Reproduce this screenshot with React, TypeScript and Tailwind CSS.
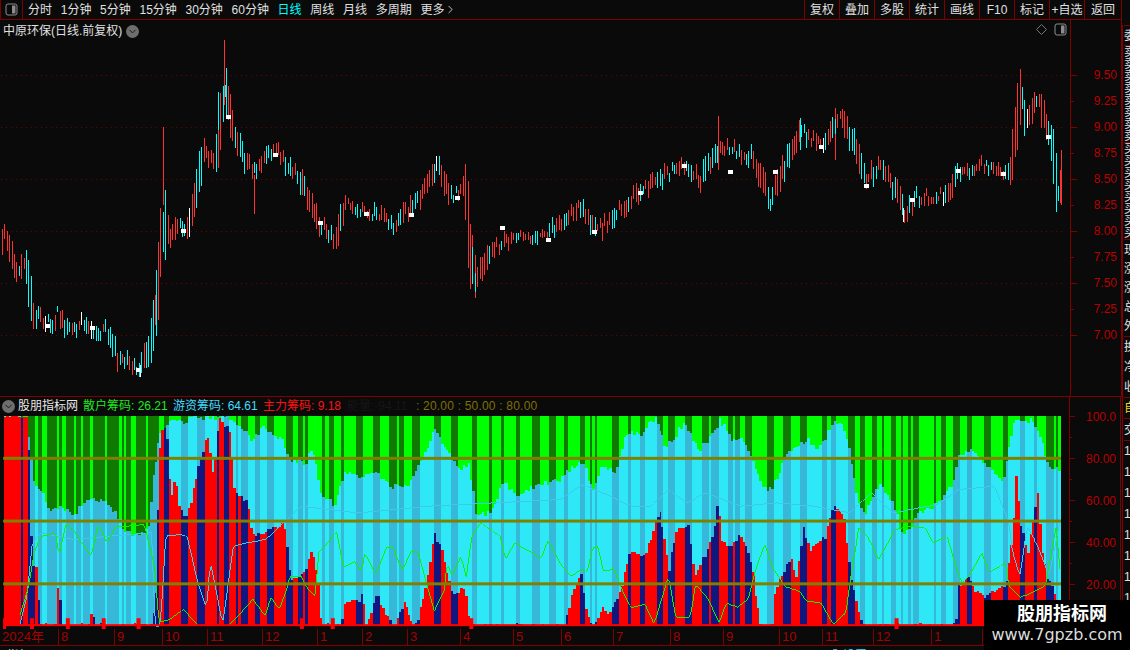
import React from "react";
import { ChevronDown, ChevronRight } from "lucide-react";

type Pt = number[];

// zoomed-in readings of the chart outlines, converted back to page coordinates
const L3 = (p: Pt[]) => p.map(([v, w]) => [v / 2.8, 390 + w / 3]);
const L4 = (p: Pt[]) => p.map(([v, w]) => [v / 2.8, 520 + w / 3]);
const R5 = (p: Pt[]) => p.map(([v, w]) => [560 + v / 2.75, 390 + w / 3]);
const R6 = (p: Pt[]) => p.map(([v, w]) => [560 + v / 2.75, 520 + w / 3]);

const lerp = (keys: Pt[], x: number) => {
  if (x <= keys[0][0]) return keys[0][1];
  for (let i = 1; i < keys.length; i++) {
    if (x <= keys[i][0]) {
      const [x0, y0] = keys[i - 1];
      const [x1, y1] = keys[i];
      return y0 + ((y1 - y0) * (x - x0)) / Math.max(x1 - x0, 0.01);
    }
  }
  return keys[keys.length - 1][1];
};

const seeded = (seed: number) => () => {
  seed = (seed + 0x6d2b79f5) | 0;
  let t = Math.imul(seed ^ (seed >>> 15), 1 | seed);
  t = (t + Math.imul(t ^ (t >>> 7), 61 | t)) ^ t;
  return ((t ^ (t >>> 14)) >>> 0) / 4294967296;
};

const BAR_STEP = 2.4;
const BAR_COUNT = 442;
const barX = (i: number) => 2 + i * BAR_STEP;

const priceKeys: Pt[] = [
  [1, 247], [5, 230], [9, 245], [15, 265], [20, 277], [24, 257], [27, 277], [33, 313], [42, 320], [50, 325],
  [58, 313], [68, 333], [83, 323], [97, 333], [107, 330], [117, 357], [127, 363], [140, 368], [150, 343], [155, 308],
  [158, 280], [161, 235], [165, 220], [171, 240], [177, 223], [187, 233], [197, 187], [203, 150], [215, 160], [222, 105],
  [226, 90], [232, 130], [240, 150], [252, 172], [275, 150], [300, 180], [320, 225], [335, 240], [345, 205], [380, 215],
  [395, 225], [420, 195], [437, 165], [450, 195], [465, 190], [470, 262], [475, 280], [490, 250], [520, 235], [545, 235],
  [580, 205], [596, 232], [640, 190], [680, 165], [700, 180], [720, 145], [750, 155], [770, 200], [800, 130], [820, 145],
  [840, 115], [852, 140], [866, 180], [880, 165], [898, 197], [905, 215], [915, 197], [945, 195], [958, 172], [980, 165],
  [1003, 173], [1010, 170], [1018, 113], [1021, 93], [1026, 125], [1033, 110], [1038, 100], [1047, 130], [1052, 140], [1056, 183], [1060, 197], [1062, 167],
];

const specials: [number, number, number, string][] = [
  [224, 40, 105, "#ff3232"], [226, 68, 118, "#00ffff"], [220, 97, 150, "#ff3232"], [218, 92, 130, "#00ffff"],
  [163, 127, 205, "#ff3232"], [165, 190, 260, "#00ffff"], [155, 295, 325, "#ff3232"], [158, 267, 294, "#ff3232"],
  [472, 235, 282, "#ff3232"], [475, 255, 298, "#ff3232"], [1020, 69, 125, "#ff3232"], [1017, 83, 146, "#ff3232"],
  [1056, 153, 212, "#00ffff"], [1061, 150, 205, "#ff3232"], [835, 108, 160, "#ff3232"], [718, 116, 170, "#ff3232"],
  [800, 118, 150, "#00ffff"], [140, 365, 377, "#ffffff"], [903, 208, 222, "#ffffff"], [254, 175, 214, "#ff3232"],
];

const markers: Pt[] = [
  [47, 326], [92, 328], [138, 370], [183, 231], [228, 117], [275, 155], [320, 223], [366, 214], [411, 215], [457, 198], [502, 228],
  [548, 240], [594, 232], [640, 193], [684, 166], [730, 172], [775, 172], [821, 147], [866, 186], [912, 200], [958, 171], [1003, 174], [1048, 137],
];

const cyanKeys: Pt[] = [
  ...L3([[0, 78], [70, 78], [75, 180], [85, 275], [100, 290], [130, 360], [160, 350], [200, 370], [240, 330], [290, 330], [330, 390]]),
  ...L4([[340, 40], [390, 45], [410, 10]]),
  ...L3([[420, 270], [440, 140], [470, 90], [500, 100], [530, 85], [600, 80], [650, 90], [700, 150], [730, 110], [780, 145], [810, 210], [850, 220], [870, 170], [890, 300], [930, 350], [960, 250], [1000, 260], [1040, 240], [1090, 290], [1140, 290], [1180, 210], [1215, 120], [1250, 190], [1280, 240], [1310, 220], [1330, 370], [1370, 370], [1410, 270], [1440, 320], [1510, 280]]),
  ...R5([[0, 270], [30, 230], [60, 210], [90, 310], [110, 235], [150, 240], [180, 130], [220, 135], [260, 80], [290, 170], [310, 150], [340, 95], [380, 180], [410, 150], [440, 90], [470, 150], [500, 140], [530, 220], [570, 310], [600, 260], [620, 190], [680, 150], [710, 180], [745, 110], [770, 90], [795, 170], [820, 340], [840, 370], [880, 280], [920, 350], [945, 440], [970, 400], [990, 370], [1040, 340], [1080, 290], [1100, 200], [1130, 180], [1160, 210], [1220, 280], [1250, 100], [1300, 90], [1330, 160], [1345, 230], [1380, 240]]),
];

const redKeys: Pt[] = [
  ...L3([[0, 78], [70, 78], [75, 260]]),
  ...L4([[80, 130], [95, 140], [105, 320], [150, 320], [155, 180], [165, 320], [240, 320], [250, 265], [260, 320], [420, 320], [430, 200]]),
  ...L3([[445, 78], [458, 78], [465, 200], [475, 330], [485, 240], [495, 340], [510, 385], [530, 340], [550, 230], [560, 190], [575, 130], [590, 260], [610, 80], [640, 130], [650, 300], [670, 320], [690, 340]]),
  ...L4([[700, 50], [790, 10], [800, 100], [810, 190], [830, 170], [850, 150], [870, 90], [885, 190], [895, 320], [950, 320], [960, 250], [1000, 250], [1010, 220], [1020, 320], [1050, 225], [1075, 290], [1100, 320], [1110, 290], [1130, 245], [1150, 320], [1170, 300], [1190, 200], [1215, 45], [1240, 110], [1260, 225], [1300, 210], [1315, 320]]),
  ...R6([[-20, 320], [10, 320], [30, 230], [55, 165], [70, 280], [85, 320], [115, 270], [130, 290], [160, 230], [190, 90], [230, 115], [260, 10], [275, -20], [300, 150], [320, 30], [355, 15], [370, 180], [400, 105], [425, 30], [435, -84], [445, 60], [470, 90], [490, 45], [510, 70], [530, 150], [550, 320], [585, 320], [590, 230], [610, 170], [635, 115], [650, 180], [670, 25], [690, 90], [710, 70], [730, 50], [750, -45], [780, -10], [800, 170], [820, 270], [830, 320], [870, 320], [880, 310], [890, 320], [1090, 320], [1100, 205], [1125, 170], [1140, 210], [1165, 235], [1230, 200], [1250, 20], [1258, -159], [1270, 10], [1290, 100], [1305, 0], [1315, -114], [1325, 50], [1340, 170], [1360, 210], [1380, 320]]),
];

const greenLine: Pt[] = [
  ...L4([[40, 318], [50, 290], [75, 200], [90, 100], [110, 50], [150, 40], [160, 110], [180, 10], [200, 30], [250, 110], [270, 15], [295, 70], [320, 20], [350, 20], [400, 15], [430, 150], [440, 310], [470, 300], [510, 270], [550, 318], [640, 318], [660, 295], [690, 260], [705, 240], [740, 290], [755, 235], [780, 270], [800, 210], [810, 170], [840, 170], [860, 210], [880, 230], [890, 100], [900, 90], [940, 35], [960, 145], [990, 125], [1010, 160], [1020, 100], [1050, 165], [1080, 85], [1100, 85], [1125, 155], [1150, 95], [1170, 100], [1190, 180], [1215, 275], [1245, 210], [1250, 130], [1265, 170], [1290, 110], [1305, 175], [1320, 50], [1345, 10], [1400, 50], [1415, 120], [1440, 70], [1490, 100], [1515, 120], [1535, 60], [1568, 130]]),
  ...R6([[30, 170], [60, 150], [75, 160], [90, 85], [105, 80], [120, 155], [150, 150], [175, 220], [195, 265], [235, 255], [260, 315], [300, 170], [320, 295], [360, 295], [375, 195], [410, 240], [440, 310], [460, 250], [490, 265], [520, 240], [540, 150], [565, 75], [590, 150], [620, 200], [660, 215], [680, 245], [720, 250], [755, 315], [790, 280], [800, 195], [825, 25], [850, 50], [880, 120], [925, 30], [970, 20], [1010, 25], [1030, 70], [1070, 50], [1095, 150], [1110, 190], [1130, 170], [1165, 100], [1185, 160], [1230, 130], [1240, 200], [1270, 235], [1340, 200], [1370, 20], [1380, 150]]),
];

const cyanLine: Pt[] = [
  ...L4([[20, 318], [50, 318], [70, 230], [85, 70], [110, 40], [200, 60], [300, 50], [420, 40], [430, 320], [445, 320], [460, 50], [500, 45], [520, 50], [550, 190], [575, 270], [585, 125], [620, 315], [650, 80], [690, 70], [740, 60], [790, 10], [840, -40], [1000, -20], [1200, -40], [1568, -60]]),
  ...R5([[60, 285], [100, 300], [200, 350], [250, 350], [300, 300], [350, 340], [400, 310], [500, 350], [600, 340], [700, 350], [800, 370], [860, 310], [920, 370], [1040, 345], [1100, 300], [1200, 290], [1240, 400]]),
  ...R6([[1250, 100], [1270, 170], [1290, 20], [1310, 60], [1330, 110], [1350, 170], [1380, 10]]),
];

const rnd = seeded(7);
const flags: boolean[] = [];
while (flags.length < BAR_COUNT) {
  const up = flags.length === 0 || !flags[flags.length - 1];
  const early = barX(flags.length) < 160;
  const run = 1 + Math.floor(rnd() * (up ? (early ? 2 : 6) : early ? 5 : 3));
  for (let k = 0; k < run; k++) flags.push(up);
}
for (let i = 0; i < 7; i++) flags[i] = true;

const PriceBars = () => {
  const r = seeded(21);
  const paths: Record<string, string> = { "#ff3232": "", "#00ffff": "", "#ffffff": "" };
  for (let i = 0; i < BAR_COUNT; i++) {
    const x = barX(i);
    const slope = Math.abs(lerp(priceKeys, x + 3) - lerp(priceKeys, x - 3));
    const cy = lerp(priceKeys, x) + (r() - 0.5) * 11;
    const h = 4 + r() * 10 + slope;
    const c = r() < 0.04 ? "#ffffff" : flags[i] ? "#ff3232" : "#00ffff";
    const xx = Math.round(x) + 0.5;
    paths[c] += `M${xx} ${Math.round(cy - h / 2)}V${Math.round(cy + h / 2)}`;
  }
  for (const [x, a, b, c] of specials) paths[c] += `M${x + 0.5} ${a}V${b}`;
  return (
    <>
      {Object.entries(paths).map(([c, d]) => (
        <path key={c} d={d} stroke={c} strokeWidth={1} fill="none" shapeRendering="crispEdges" />
      ))}
    </>
  );
};

const IndicatorBars = () => {
  const r = seeded(3);
  const bars = [];
  for (let i = 0; i < BAR_COUNT; i++) {
    const x = Math.round(barX(i));
    const next = Math.round(barX(i + 1));
    const w = Math.min(next, 1063) - x;
    if (w <= 0) continue;
    const up = flags[i];
    const red = Math.min(627, Math.round(lerp(redKeys, x) + (r() - 0.5) * 5));
    const top = Math.max(416, Math.round(lerp(cyanKeys, x) + (r() - 0.5) * 6));
    const redTop = Math.max(top, red < 416 ? 416 : red);
    bars.push(
      <g key={i}>
        <rect x={x} y={416} width={w} height={Math.max(top - 416, 0)} fill={up ? "#00ff00" : "#107a00"} />
        <rect x={x} y={top} width={w} height={redTop - top} fill={up ? "#2ee8f8" : "#38b8d8"} />
        <rect x={x} y={redTop} width={w} height={627 - redTop} fill={up ? "#ff0000" : "#101880"} />
      </g>
    );
  }
  return <g shapeRendering="crispEdges">{bars}</g>;
};

const linePoints = (keys: Pt[]) => {
  const pts: string[] = [];
  for (let x = 18; x < 1063; x += 2) pts.push(`${x},${Math.round(lerp(keys, x))}`);
  return pts.join(" ");
};

const PriceChart = () => (
  <svg width={1069} height={376} viewBox="0 20 1069 376" className="block">
    {[75, 127, 179, 231, 283, 335].map((y) => (
      <line key={y} x1={1} x2={1066} y1={y + 0.5} y2={y + 0.5} stroke="#6e0000" strokeDasharray="1 4" />
    ))}
    <PriceBars />
    {markers.map(([x, y]) => (
      <rect key={x} x={x - 2} y={y - 2} width={5} height={4} fill="#ffffff" />
    ))}
  </svg>
);

const IndicatorChart = () => (
  <svg width={1069} height={214} viewBox="0 416 1069 214" className="block">
    <rect x={0} y={416} width={2} height={214} fill="#0a0a0a" />
    <IndicatorBars />
    <polyline points={linePoints(cyanLine)} fill="none" stroke="#40c8e8" strokeWidth={1} shapeRendering="crispEdges" />
    <polyline points={linePoints(greenLine)} fill="none" stroke="#10f000" strokeWidth={1} shapeRendering="crispEdges" />
    <rect x={2} y={625} width={1061} height={2} fill="#ff0000" />
    {[30, 66, 102, 137, 301, 332, 471, 898].map((x) => (
      <rect key={x} x={x - 2} y={619} width={4} height={11} fill="#ff0000" />
    ))}
    <rect x={1} y={619} width={3} height={11} fill="#ff0000" />
    {[458, 521, 584].map((y) => (
      <rect key={y} x={1} y={y - 1} width={1062} height={3} fill="#808000" />
    ))}
  </svg>
);

const PanelIcon = () => (
  <svg width={13} height={13} viewBox="0 0 13 13">
    <rect x={1} y={1} width={11} height={11} rx={2} fill="none" stroke="#8c8c8c" />
    <rect x={7} y={2.5} width={3.5} height={8} fill="#8c8c8c" />
  </svg>
);

const DiamondIcon = () => (
  <svg width={11} height={11} viewBox="0 0 11 11">
    <path d="M5.5 .5L10.5 5.5L5.5 10.5L.5 5.5Z" fill="none" stroke="#777" />
  </svg>
);

const RoundChevron = () => (
  <span className="flex h-[13px] w-[13px] items-center justify-center rounded-full bg-[#6e6e6e]">
    <ChevronDown size={11} strokeWidth={2} className="text-[#111]" />
  </span>
);

const periods = ["分时", "1分钟", "5分钟", "15分钟", "30分钟", "60分钟", "日线", "周线", "月线", "多周期"];
const tools = ["复权", "叠加", "多股", "统计", "画线", "F10", "标记", "+自选"];

const TopBar = () => (
  <div className="flex h-[20px] shrink-0 items-stretch border-b border-[#800000] text-[#e0e0e0]">
    <div className="flex w-[23px] items-center justify-center border-x border-[#800000]">
      <PanelIcon />
    </div>
    <div className="flex flex-1 items-center gap-[8.7px] pl-[5px]">
      {periods.map((p) => (
        <span key={p} className={p === "日线" ? "text-[#00ffff]" : ""}>
          {p}
        </span>
      ))}
      <span className="flex items-center">
        更多
        <ChevronRight size={13} strokeWidth={1.4} className="text-white" />
      </span>
    </div>
    <div className="flex">
      {tools.map((t) => (
        <div key={t} className="flex w-[35px] items-center justify-center border-l border-[#800000]">
          {t}
        </div>
      ))}
      <div className="flex w-[38px] items-center justify-center border-x border-[#800000]">返回</div>
    </div>
  </div>
);

const priceLabels = ["9.50", "9.25", "9.00", "8.75", "8.50", "8.25", "8.00", "7.75", "7.50", "7.25", "7.00"];

const PriceAxis = () => (
  <div className="flex w-[52px] flex-col border-x border-[#800000] pt-[42px] text-[#b80000]">
    {priceLabels.map((l, i) => (
      <div key={l} className="flex h-[26px] items-center justify-between pr-[4px]">
        <span className={`h-px bg-[#800000] ${i % 2 === 0 ? "w-[6px]" : "w-[3px]"}`} />
        <span>{l}</span>
      </div>
    ))}
  </div>
);

const indLabels = ["100.0", "", "80.00", "", "60.00", "", "40.00", "", "20.00", ""];

const IndicatorAxis = () => (
  <div className="flex w-[52px] flex-col border-x border-[#800000] pt-[9px] text-[#b80000]">
    {indLabels.map((l, i) => (
      <div key={i} className="flex h-[21px] items-center justify-between pr-[4px]">
        <span className={`h-px bg-[#800000] ${l ? "w-[5px]" : "w-[2px]"}`} />
        <span>{l}</span>
      </div>
    ))}
  </div>
);

const IndicatorHeader = () => (
  <div className="flex h-[19px] items-center pl-[2px] whitespace-nowrap">
    <RoundChevron />
    <span className="ml-[3px] text-[#e8e8e8]">股朋指标网</span>
    <span className="ml-[5px] w-[90px] text-[#20e820]">散户筹码: 26.21</span>
    <span className="w-[90px] text-[#40dcff]">游资筹码: 64.61</span>
    <span className="w-[84px] text-[#ff1010]">主力筹码: 9.18</span>
    <span className="w-[69px] text-[#161616]">能量:-94.11</span>
    <span className="tracking-[0.2px] text-[#807000]">: 20.00 : 50.00 : 80.00</span>
  </div>
);

const months: [string, number][] = [
  ["8", 58], ["9", 114], ["10", 162], ["11", 207], ["12", 262], ["1", 317], ["2", 362], ["3", 407], ["4", 460], ["5", 513],
  ["6", 561], ["7", 613], ["8", 670], ["9", 723], ["10", 779], ["11", 822], ["12", 873], ["1", 931], ["2", 982],
];

const DateAxis = () => (
  <div className="relative h-[17px] border-b border-[#800000] text-[13px] text-[#a80000]">
    <span className="absolute left-[2px] top-0 leading-[16px]">2024年</span>
    {months.map(([m, x]) => (
      <span
        key={x}
        className="absolute top-0 h-[16px] border-l border-[#800000] pl-[2px] leading-[16px]"
        style={{ left: x }}
      >
        {m}
      </span>
    ))}
  </div>
);

const farRows: { text: string; h: string; cls?: string }[] = [
  { text: "委", h: "h-[20px]" },
  { text: "卖卖卖卖卖卖卖卖", h: "h-[97px]" },
  { text: "买买买买买买买买", h: "h-[97px]" },
  { text: "现涨涨总外", h: "h-[97px]" },
  { text: "换净收", h: "h-[61px]" },
  { text: "自", h: "h-[21px]", cls: "text-[#e8d820]" },
  { text: "交", h: "h-[22px]" },
  { text: "1111111111", h: "h-[210px]" },
];

const FarColumn = () => (
  <div className="flex-1 overflow-hidden pt-[25px]">
    <div className="flex flex-col border-l border-[#800000] pl-[1px] text-[#e0e0e0]">
      {farRows.map((row) => (
        <div
          key={row.text}
          className={`flex flex-col justify-around overflow-hidden border-t border-[#800000] text-[12px] leading-[12px] ${row.h} ${row.cls ?? ""}`}
        >
          {row.text.split("").map((ch, i) => (
            <span key={i}>{ch}</span>
          ))}
        </div>
      ))}
    </div>
  </div>
);

const App = () => (
  <div className="relative flex h-[650px] w-[1130px] overflow-hidden bg-[#0a0a0a] font-['Liberation_Sans','Noto_Sans_CJK_SC',sans-serif] text-[12px]">
    <div className="flex w-[1122px] shrink-0 flex-col">
      <TopBar />

      {/* price pane */}
      <div className="flex h-[377px] shrink-0 border-b border-[#800000]">
        <div className="relative flex-1">
          <PriceChart />
          <div className="absolute left-[3px] top-[2px] flex items-center gap-[4px] text-[#e0e0e0]">
            <span>中原环保(日线.前复权)</span>
            <RoundChevron />
          </div>
          <div className="absolute right-[3px] top-[3px] flex items-center gap-[7px]">
            <DiamondIcon />
            <PanelIcon />
          </div>
        </div>
        <PriceAxis />
      </div>

      {/* indicator pane */}
      <div className="flex min-h-0 flex-1">
        <div className="flex w-[1069px] flex-col">
          <IndicatorHeader />
          <IndicatorChart />
          <DateAxis />
          <div className="h-[4px] overflow-hidden pl-[7px] pt-[1px] text-[#e0e0e0]">
            <span>指标</span>
            <span className="ml-[24px]">周</span>
            <span className="ml-[760px]">成</span>
            <span className="ml-[4px] text-[#40dcff]">设置</span>
          </div>
        </div>
        <IndicatorAxis />
      </div>
    </div>
    <FarColumn />

    {/* site watermark over the corner */}
    <div className="absolute bottom-0 right-0 flex h-[50px] w-[146px] flex-col items-center bg-black pt-[3px]">
      <span className="ml-[10px] text-[18px] leading-[22px] font-bold text-white">股朋指标网</span>
      <span className="font-['DejaVu_Sans',sans-serif] text-[16px] leading-[20px] text-[#dcdcdc]">www.7gpzb.com</span>
    </div>
  </div>
);

export default App;
